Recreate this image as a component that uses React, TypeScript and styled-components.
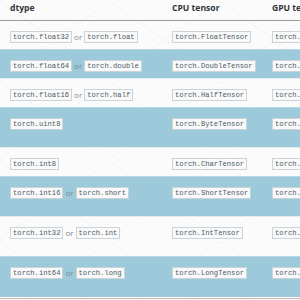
import React from 'react';
import styled, { createGlobalStyle } from 'styled-components';

interface DtypeRow {
  names: string[];
  cpu: string;
  gpu: string;
  tall?: boolean;
}

const rows: DtypeRow[] = [
  { names: ['torch.float32', 'torch.float'], cpu: 'torch.FloatTensor', gpu: 'torch.cuda.FloatTensor' },
  { names: ['torch.float64', 'torch.double'], cpu: 'torch.DoubleTensor', gpu: 'torch.cuda.DoubleTensor' },
  { names: ['torch.float16', 'torch.half'], cpu: 'torch.HalfTensor', gpu: 'torch.cuda.HalfTensor' },
  { names: ['torch.uint8'], cpu: 'torch.ByteTensor', gpu: 'torch.cuda.ByteTensor', tall: true },
  { names: ['torch.int8'], cpu: 'torch.CharTensor', gpu: 'torch.cuda.CharTensor' },
  { names: ['torch.int16', 'torch.short'], cpu: 'torch.ShortTensor', gpu: 'torch.cuda.ShortTensor', tall: true },
  { names: ['torch.int32', 'torch.int'], cpu: 'torch.IntTensor', gpu: 'torch.cuda.IntTensor', tall: true },
  { names: ['torch.int64', 'torch.long'], cpu: 'torch.LongTensor', gpu: 'torch.cuda.LongTensor', tall: true },
];

const App: React.FC = () => {
  return (
    <>
      <GlobalStyle />
      <Page>
        <Table>
          <colgroup>
            <col style={{ width: 162 }} />
            <col style={{ width: 100 }} />
            <col style={{ width: 160 }} />
          </colgroup>
          <thead>
            <tr>
              <HeadCell>dtype</HeadCell>
              <HeadCell>CPU tensor</HeadCell>
              <HeadCell>GPU tensor</HeadCell>
            </tr>
          </thead>
          <tbody>
            {rows.map((row, i) => (
              <Row key={row.cpu} $odd={i % 2 === 1} $tall={row.tall}>
                <Cell>
                  {row.names.map((n, j) => (
                    <React.Fragment key={n}>
                      {j > 0 && <Or>or</Or>}
                      <Code>{n}</Code>
                    </React.Fragment>
                  ))}
                </Cell>
                <Cell>
                  <Code>{row.cpu}</Code>
                </Cell>
                <Cell>
                  <Code>{row.gpu}</Code>
                </Cell>
              </Row>
            ))}
          </tbody>
        </Table>
        <BottomRule />
      </Page>
    </>
  );
};

export default App;

const GlobalStyle = createGlobalStyle`
  html, body {
    margin: 0;
    padding: 0;
    background: #fbfbfb;
  }
`;

const Page = styled.div`
  width: 300px;
  height: 300px;
  overflow: hidden;
  background-color: #fbfbfb;
  background-image:
    linear-gradient(35deg, transparent 49.6%, #eeeeee 50%, transparent 50.4%),
    linear-gradient(-35deg, transparent 49.6%, #eeeeee 50%, transparent 50.4%);
  background-size: 110px 80px;
`;

const Table = styled.table`
  width: 422px;
  table-layout: fixed;
  border-collapse: collapse;
  font-family: 'Open Sans', 'Liberation Sans', sans-serif;
`;

const HeadCell = styled.th`
  height: 20px;
  padding: 0 0 0 10px;
  line-height: 16px;
  text-align: left;
  vertical-align: top;
  font-size: 8.6px;
  font-weight: 700;
  color: #2f363c;
  border-bottom: 1px solid #9a9a9a;
  white-space: nowrap;
  overflow: hidden;
`;

const Row = styled.tr<{ $odd: boolean; $tall?: boolean }>`
  height: ${({ $tall }) => ($tall ? 40 : 29)}px;
  background: ${({ $odd }) => ($odd ? '#9ccadb' : 'transparent')};
  border-top: 1px solid ${({ $odd }) => ($odd ? '#b7d8e4' : '#e4eef2')};
`;

const Cell = styled.td`
  padding: 10px 0 0 10px;
  vertical-align: top;
  white-space: nowrap;
  overflow: hidden;
  line-height: 10px;
`;

const Code = styled.code`
  display: inline-block;
  height: 10px;
  line-height: 10px;
  padding: 0 2px;
  font-family: 'Liberation Mono', 'DejaVu Sans Mono', monospace;
  font-size: 7.2px;
  color: #4d5b66;
  background: #f9f9f9;
  border: 1px solid #c9d3d8;
  box-sizing: content-box;
  vertical-align: top;
`;

const Or = styled.span`
  display: inline-block;
  margin: 0 2px;
  font-size: 8px;
  line-height: 12px;
  color: #7c8a92;
  vertical-align: top;
`;

const BottomRule = styled.div`
  height: 1px;
  margin-top: 1px;
  background: #d8b5ae;
`;
